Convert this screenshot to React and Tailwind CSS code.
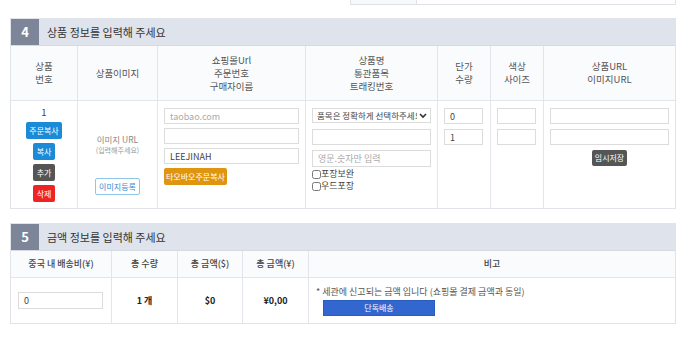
import { useState } from 'react';

// Order form: product info + price info sections

const Cell = ({ className = '', children }) => (
  <div className={`border-r border-[#e2e5ec] last:border-r-0 ${className}`}>{children}</div>
);

const Field = ({ className = '', ...props }) => (
  <input
    readOnly
    className={`block h-[16px] border border-[#dcdcdc] bg-white px-[5px] text-[9px] text-[#444] outline-none placeholder:text-[#aaa] ${className}`}
    {...props}
  />
);

const SectionHeader = ({ num, title }) => (
  <div className="flex h-[27px] items-stretch bg-[#dfe3eb] border-b border-[#d5dae3]">
    <div className="flex w-[28px] items-center justify-center bg-[#7c8698] text-[13px] font-bold text-white">
      {num}
    </div>
    <div className="flex items-center pl-[8px] text-[11px] text-[#333]">{title}</div>
  </div>
);

const App = () => {
  const [wrap, setWrap] = useState(false);
  const [wood, setWood] = useState(false);

  return (
    <div className="h-[337px] w-[693px] overflow-hidden bg-white font-['Noto_Sans_CJK_KR','Noto_Sans',sans-serif]">
      {/* tail of the previous table */}
      <div className="ml-[350px] flex h-[5px] w-[326px] border-x border-b border-[#dfe2e8]">
        <div className="w-[66px] border-r border-[#dfe2e8] bg-[#f7f8fa]" />
        <div className="flex-1" />
      </div>

      {/* 4. product info */}
      <div className="ml-[10px] mt-[13px] w-[666px] border border-[#e0e3ea]">
        <SectionHeader num="4" title="상품 정보를 입력해 주세요" />

        <div className="grid grid-cols-[67px_80px_148px_132px_53px_53px_131px] border-b border-[#e2e5ec] bg-[#fafbfc] text-[9.5px] leading-[13px] text-[#555]">
          <Cell className="flex h-[54px] items-center justify-center text-center">상품<br />번호</Cell>
          <Cell className="flex items-center justify-center">상품이미지</Cell>
          <Cell className="flex items-center justify-center text-center">쇼핑몰Url<br />주문번호<br />구매자이름</Cell>
          <Cell className="flex items-center justify-center text-center">상품명<br />통관품목<br />트래킹번호</Cell>
          <Cell className="flex items-center justify-center text-center">단가<br />수량</Cell>
          <Cell className="flex items-center justify-center text-center">색상<br />사이즈</Cell>
          <Cell className="flex items-center justify-center text-center">상품URL<br />이미지URL</Cell>
        </div>

        <div className="grid h-[107px] grid-cols-[67px_80px_148px_132px_53px_53px_131px]">
          <Cell className="flex flex-col items-center pt-[5px]">
            <div className="text-[9.5px] leading-[13px] text-[#444]">1</div>
            <div className="mt-[3px] flex flex-col items-center gap-[4px] text-[8px] leading-[17px] text-white">
              <button className="rounded-[2px] bg-[#1b8bd8] px-[3px]">주문복사</button>
              <button className="rounded-[2px] bg-[#1b8bd8] px-[3.5px]">복사</button>
              <button className="rounded-[2px] bg-[#555] px-[3.5px]">추가</button>
              <button className="rounded-[2px] bg-[#ee2424] px-[3.5px]">삭제</button>
            </div>
          </Cell>

          <Cell className="flex flex-col items-center pt-[33px]">
            <div className="text-[8.5px] leading-[11px] text-[#888]">이미지 URL</div>
            <div className="text-[7px] leading-[10px] text-[#999]">(입력해주세요)</div>
            <button className="mt-[23px] h-[17px] rounded-[2px] border border-[#8ec6ec] bg-white px-[3px] text-[8px] text-[#3a8ad0]">
              이미지등록
            </button>
          </Cell>

          <Cell className="flex flex-col gap-[4px] px-[6px] pt-[7px]">
            <Field className="w-[135px]" placeholder="taobao.com" />
            <Field className="w-[135px]" />
            <Field className="w-[135px]" defaultValue="LEEJINAH" />
            <button className="w-fit h-[17px] rounded-[2px] bg-[#df950f] px-[2px] text-[8px] text-white">
              타오바오주문복사
            </button>
          </Cell>

          <Cell className="flex flex-col px-[6px] pt-[7px]">
            <div className="relative w-[119px]">
              <select className="block h-[15px] w-full appearance-none overflow-hidden border border-[#dcdcdc] bg-white pl-[4px] pr-[13px] text-[8.5px] text-[#444] outline-none">
                <option>품목은 정확하게 선택하주세요</option>
              </select>
              <svg className="pointer-events-none absolute right-[4px] top-[4px]" width="8" height="7" viewBox="0 0 8 7">
                <path d="M1 2 L4 5 L7 2" fill="none" stroke="#333" strokeWidth="1.6" />
              </svg>
            </div>
            <Field className="mt-[6px] w-[119px]" />
            <Field className="mt-[5px] h-[17px] w-[119px]" placeholder="영문.숫자만 입력" />
            <label className="mt-[1px] flex h-[12px] items-center text-[9px] leading-[12px] text-[#444]">
              <input type="checkbox" checked={wrap} onChange={() => setWrap(!wrap)} className="m-0 h-[9px] w-[9px]" />
              포장보완
            </label>
            <label className="flex h-[12px] items-center text-[9px] leading-[12px] text-[#444]">
              <input type="checkbox" checked={wood} onChange={() => setWood(!wood)} className="m-0 h-[9px] w-[9px]" />
              우드포장
            </label>
          </Cell>

          <Cell className="flex flex-col gap-[5px] px-[6px] pt-[7px]">
            <Field className="w-[39px]" defaultValue="0" />
            <Field className="w-[39px]" defaultValue="1" />
          </Cell>

          <Cell className="flex flex-col gap-[5px] px-[6px] pt-[7px]">
            <Field className="w-[39px]" />
            <Field className="w-[39px]" />
          </Cell>

          <Cell className="flex flex-col items-center gap-[5px] px-[6px] pt-[7px]">
            <Field className="w-[119px]" />
            <Field className="w-[119px]" />
            <button className="h-[16px] rounded-[2px] bg-[#555] px-[3px] text-[8px] text-white">임시저장</button>
          </Cell>
        </div>
      </div>

      {/* 5. price info */}
      <div className="ml-[10px] mt-[14px] w-[666px] border border-[#e0e3ea]">
        <SectionHeader num="5" title="금액 정보를 입력해 주세요" />

        <div className="grid h-[27px] grid-cols-[101px_66px_65px_66px_366px] border-b border-[#e2e5ec] bg-[#fafbfc] text-[9px] font-medium text-[#444]">
          <Cell className="flex items-center justify-center">중국 내 배송비(¥)</Cell>
          <Cell className="flex items-center justify-center">총 수량</Cell>
          <Cell className="flex items-center justify-center">총 금액($)</Cell>
          <Cell className="flex items-center justify-center">총 금액(¥)</Cell>
          <Cell className="flex items-center justify-center">비고</Cell>
        </div>

        <div className="grid h-[45px] grid-cols-[101px_66px_65px_66px_366px] text-[9px] font-bold text-[#222]">
          <Cell className="flex items-center px-[7px]">
            <Field className="h-[17px] w-[85px] font-normal" defaultValue="0" />
          </Cell>
          <Cell className="flex items-center justify-center">1 개</Cell>
          <Cell className="flex items-center justify-center">$0</Cell>
          <Cell className="flex items-center justify-center">¥0,00</Cell>
          <Cell className="flex flex-col pl-[7px] pt-[8px] font-normal">
            <div className="text-[9px] leading-[11px] text-[#555]">* 세관에 신고되는 금액 입니다 (쇼핑몰 결제 금액과 동일)</div>
            <button className="ml-[7px] mt-[3px] h-[16px] w-[112px] border border-[#2a5cc0] bg-[#3367d0] text-[8px] text-white">
              단독배송
            </button>
          </Cell>
        </div>
      </div>
    </div>
  );
};

export default App;
